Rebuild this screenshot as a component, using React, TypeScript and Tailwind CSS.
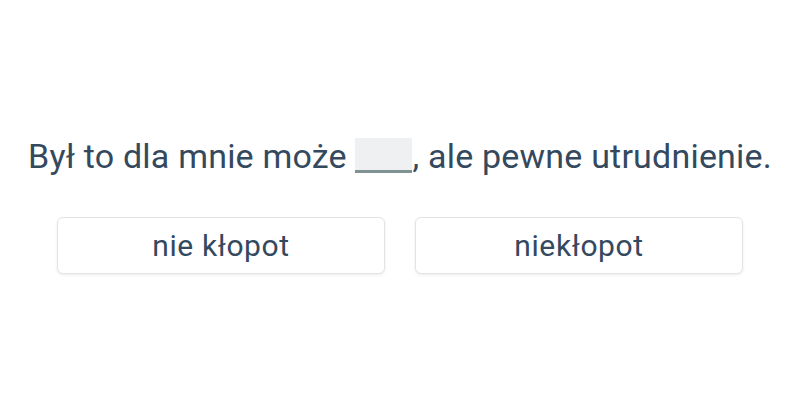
export default function App() {
  return (
    <div className="w-[800px] h-[400px] bg-white flex flex-col items-center" style={{ fontFamily: "Roboto, sans-serif" }}>
      <div className="mt-[136px] text-[34px] leading-[40px] tracking-[0.2px] text-[#34495e] flex items-center whitespace-nowrap">
        <span>Był to dla mnie może&nbsp;</span>
        <span className="inline-block w-[57px] h-[35px] bg-[#eef0f2] border-b-[3px] border-[#7f9492] translate-y-[-1px]"></span>
        <span>, ale pewne utrudnienie.</span>
      </div>
      <div className="mt-[41px] flex gap-[30px]">
        <button className="w-[328px] h-[57px] bg-white border border-[#e2e4e6] rounded-[6px] shadow-[0_1px_3px_rgba(0,0,0,0.08)] text-[30px] tracking-[0.6px] text-[#34495e]">nie kłopot</button>
        <button className="w-[328px] h-[57px] bg-white border border-[#e2e4e6] rounded-[6px] shadow-[0_1px_3px_rgba(0,0,0,0.08)] text-[30px] tracking-[0.6px] text-[#34495e]">niekłopot</button>
      </div>
    </div>
  );
}
